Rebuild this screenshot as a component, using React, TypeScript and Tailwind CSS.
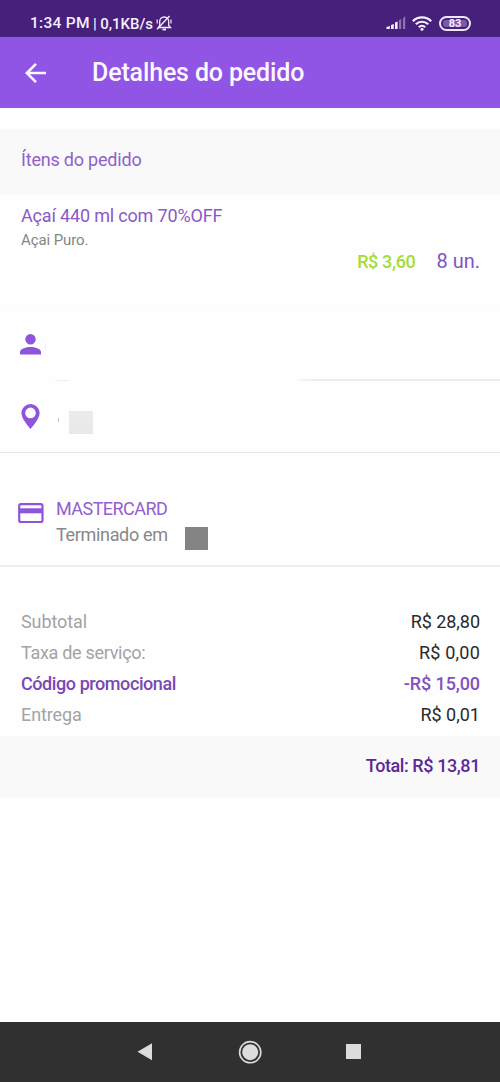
import React from "react";

interface SummaryRow {
  label: string;
  value: string;
  labelClass: string;
  valueClass: string;
}

const rows: SummaryRow[] = [
  {
    label: "Subtotal",
    value: "R$ 28,80",
    labelClass: "text-[#a3a3a3] tracking-[-0.1px]",
    valueClass: "text-[#2a2a2a] tracking-[-0.05px]",
  },
  {
    label: "Taxa de serviço:",
    value: "R$ 0,00",
    labelClass: "text-[#a3a3a3] tracking-[-0.3px]",
    valueClass: "text-[#2a2a2a] tracking-[0.2px]",
  },
  {
    label: "Código promocional",
    value: "-R$ 15,00",
    labelClass: "text-[#7a48b5] font-medium tracking-[-0.42px]",
    valueClass: "text-[#8450c0] font-medium tracking-[-0.1px]",
  },
  {
    label: "Entrega",
    value: "R$ 0,01",
    labelClass: "text-[#a3a3a3] tracking-[-0.1px]",
    valueClass: "text-[#2a2a2a] tracking-[0px]",
  },
];

const StatusBar: React.FC = () => (
  <div className="flex h-[37px] items-center bg-[#46207a] pt-[9px] pr-[29px] pl-[30px] text-[#f5effc]">
    <span className="pt-[2px] text-[15.5px] leading-none font-medium tracking-[0.3px] whitespace-pre">
      1:34 PM
    </span>
    <span className="ml-[3px] pt-[2px] text-[15px] leading-none font-medium tracking-[-0.05px] whitespace-pre">
      | 0,1KB/s
    </span>
    <svg className="ml-[3px] h-4 w-4" viewBox="0 0 16 16" fill="none" stroke="currentColor">
      <path d="M2.5 12.500h12l-1.800-2V6.500a4.500 4.500 0 0 0-9 0v4z" strokeWidth="1.3" />
      <path d="M1 14.200 13.500 1" strokeWidth="1.4" />
      <path d="M6.500 14.500h3.500" strokeWidth="1.8" />
      <path d="M1.200 4.500v4M15 4.500v4" strokeWidth="1.2" />
    </svg>
    <svg className="ml-auto h-[14px] w-[20px]" viewBox="0 0 20 14" fill="currentColor">
      <path d="M.5 13v-2l3.300-1v3zM5 9l2.800-1v5H5zM9 6.500l2.600-1V13H9z" />
      <path d="M13 4l2.200-1v10H13zM17 2l2.200-1.500V13H17z" opacity=".4" />
    </svg>
    <svg className="ml-[6px] h-[15px] w-[20px]" viewBox="0 0 20 15" fill="none" stroke="currentColor" strokeWidth="2.2">
      <path d="M.8 5.200a13 13 0 0 1 18.400 0M3.800 8.300a8.800 8.800 0 0 1 12.400 0M6.800 11.200a4.600 4.600 0 0 1 6.400 0" />
      <circle cx="10" cy="13.200" r="1.500" fill="currentColor" stroke="none" />
    </svg>
    <div className="ml-[7px] flex h-[15px] w-[32px] rounded-full border-2 border-[#eee5f8] p-[2px]">
      <div className="flex flex-1 items-center justify-center rounded-[3px] bg-[#7a5ba6] text-[11px] leading-none font-bold">
        83
      </div>
    </div>
  </div>
);

const AppBar: React.FC = () => (
  <div className="flex h-[71px] items-center bg-[#9155e6] pl-[25px] text-[#fcf7ff]">
    <svg className="h-[22px] w-[22px]" viewBox="0 0 22 22" fill="none" stroke="currentColor" strokeWidth="2.6">
      <path d="M21 11H2M11 1.800 1.800 11l9.200 9.200" />
    </svg>
    <h1 className="ml-[45px] text-[25px] leading-none font-medium tracking-[-0.15px] whitespace-nowrap">
      Detalhes do pedido
    </h1>
  </div>
);

const NavBar: React.FC = () => (
  <div className="flex h-[60px] bg-[#303030] pt-[18px] pl-[137px] text-[#dcdcdc]">
    <svg className="h-[24px] w-[16px]" viewBox="0 0 16 24" fill="currentColor">
      <path d="M15 3.300v17L.5 11.800z" />
    </svg>
    <svg className="ml-[85px] h-[24px] w-[24px]" viewBox="0 0 24 24" fill="none" stroke="currentColor">
      <circle cx="12.2" cy="12.2" r="10.6" strokeWidth="1.6" />
      <circle cx="12.2" cy="12.2" r="8" fill="currentColor" stroke="none" />
    </svg>
    <div className="mt-[4px] ml-[84px] h-[15px] w-[15px] bg-[#dcdcdc]" />
  </div>
);

export default function App() {
  return (
    <div className="flex h-[1082px] w-[500px] flex-col overflow-hidden bg-[#fefefe] font-[Roboto,'Noto_Sans',sans-serif] text-[18px] leading-none">
      <StatusBar />
      <AppBar />

      <div className="mt-[21px] flex h-[66px] items-center bg-[#f9f9f9] pb-[4px] pl-[21px] tracking-[-0.2px] text-[#915fcb]">
        Ítens do pedido
      </div>

      {/* Order item */}
      <div className="h-[112px] pt-[12px] pr-[20px] pl-[21px]">
        <p className="tracking-[-0.17px] text-[#8b59c8]">Açaí 440 ml com 70%OFF</p>
        <p className="mt-[8px] text-[15px] tracking-[-0.1px] text-[#858585]">Açai Puro.</p>
        <div className="mt-[3px] flex items-center justify-end">
          <span className="pt-px font-medium tracking-[-0.35px] text-[#a5dd38]">R$ 3,60</span>
          <span className="ml-[21px] text-[20px] text-[#8253c4]">8 un.</span>
        </div>
      </div>

      {/* Customer */}
      <div className="relative h-[74px] border-t border-[#fbfbfb] pt-[26px] pl-[20px]">
        <svg className="h-[21px] w-[21px]" viewBox="0 0 21 21" fill="#8e54dc">
          <circle cx="10.5" cy="5.2" r="5.2" />
          <path d="M0 20.500v-2.400c0-3.600 6.200-5.200 10.500-5.200S21 14.500 21 18.100v2.400z" />
        </svg>
        <div className="absolute right-0 bottom-0 h-[2px] w-[203px] bg-gradient-to-r from-[#f8f8f8] to-[#ececec] to-10%" />
        <div className="absolute bottom-0 left-[55px] h-[1px] w-[14px] bg-[#ededed]" />
        <div className="absolute top-[34px] left-[45px] h-[9px] w-[1px] bg-[#f2f2f2]" />
      </div>

      {/* Address */}
      <div className="relative h-[72px] border-b border-[#e6e6e6] pt-[23px] pl-[21px]">
        <svg className="h-[25px] w-[19px]" viewBox="0 0 19 25" fill="#8e54dc">
          <path
            fillRule="evenodd"
            d="M9.500 0A9.100 9.100 0 0 0 .4 9.100C.4 15.500 9.500 25 9.500 25s9.100-9.500 9.100-15.900A9.100 9.100 0 0 0 9.500 0zm0 3.600a5.300 5.300 0 1 1 0 10.600 5.300 5.300 0 0 1 0-10.600z"
          />
        </svg>
        <div className="absolute top-[37px] left-[58px] h-[4px] w-[1px] bg-[#c4bccb]" />
        <div className="absolute top-[30px] left-[69px] h-[23px] w-[24px] bg-gradient-to-b from-[#ececec] to-[#e8e8e8]" />
      </div>

      {/* Payment */}
      <div className="relative h-[114px] border-b-2 border-[#efefef] pt-[46px] pl-[18px]">
        <div className="flex">
          <svg className="mt-[4px] h-[21px] w-[26px]" viewBox="0 0 26 21">
            <rect x="1.2" y="1.2" width="23.3" height="17.8" rx="1.8" fill="none" stroke="#8e54dc" strokeWidth="2.2" />
            <path d="M1 5.300h23.500v5H1z" fill="#8e54dc" />
          </svg>
          <div className="ml-[12px] pt-px">
            <p className="tracking-[-0.55px] text-[#9260cf]">MASTERCARD</p>
            <p className="mt-[8px] tracking-[-0.33px] text-[#888888]">Terminado em</p>
          </div>
        </div>
        <div className="absolute top-[74px] left-[185px] h-[23px] w-[23px] bg-[#848484]" />
      </div>

      {/* Summary */}
      <div className="h-[169px] pt-[39px] pr-[20px] pl-[21px]">
        {rows.map((row) => (
          <div key={row.label} className="flex h-[31px] items-center justify-between">
            <span className={row.labelClass}>{row.label}</span>
            <span className={row.valueClass}>{row.value}</span>
          </div>
        ))}
      </div>
      <div className="flex h-[61px] items-center justify-end bg-[#f9f9f9] pr-[20px] pb-px font-medium tracking-[-0.42px] text-[#5d2897]">
        Total: R$ 13,81
      </div>

      <div className="flex-1" />
      <NavBar />
    </div>
  );
}
